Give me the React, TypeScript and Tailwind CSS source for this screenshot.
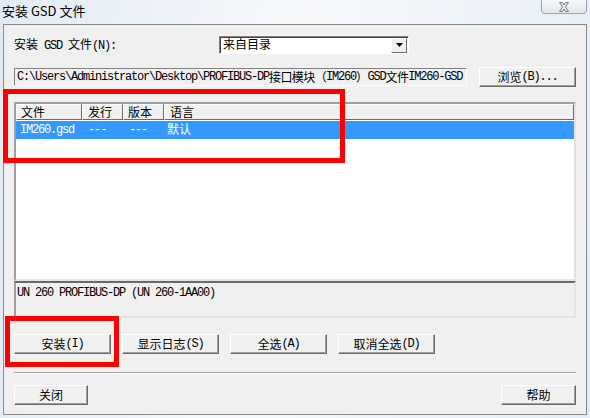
import React from "react";

const CJK = /([\u2E80-\u9FFF\uFF00-\uFFEF\u3000-\u303F]+)/;

// mixed text: ascii in a narrow mono, CJK in Noto at 12px (like SimSun)
function T({ s, tight }: { s: string; tight?: boolean }) {
  return (
    <>
      {s.split(CJK).map((p, i) =>
        CJK.test(p) ? (
          <span
            key={i}
            className={
              tight
                ? "font-['Noto_Sans_CJK_SC',sans-serif] text-[12px] tracking-[-0.6px]"
                : "font-['Noto_Sans_CJK_SC',sans-serif] text-[12px] tracking-normal"
            }
          >
            {p}
          </span>
        ) : (
          <span key={i}>{p}</span>
        )
      )}
    </>
  );
}

function Btn({ label, className }: { label: string; className: string }) {
  return (
    <div
      className={
        "flex h-[20px] items-center justify-center border border-t-white border-l-white border-r-[#6a6a6a] border-b-[#6a6a6a] bg-[#f0f0f0] text-[12px] leading-none tracking-[-1.2px] text-black shadow-[inset_-1px_-1px_0_#a0a0a0] font-['Liberation_Mono','Noto_Sans_CJK_SC',monospace] " +
        className
      }
    >
      <T s={label} />
    </div>
  );
}

function CloseX() {
  return (
    <svg width="12" height="10" viewBox="0 0 12 10">
      <polygon
        points="1.5,0.5 4.5,0.5 6,3 7.5,0.5 10.5,0.5 7.5,5 10.5,9.5 7.5,9.5 6,7 4.5,9.5 1.5,9.5 4.5,5"
        fill="#ececec"
        stroke="#7d7d7d"
        strokeWidth="1"
        strokeLinejoin="round"
      />
    </svg>
  );
}

export default function App() {
  return (
    <div className="relative flex h-[418px] w-[590px] flex-col overflow-hidden bg-[linear-gradient(100deg,#e2eaf4_0%,#f7f9fc_45%,#eef3f9_75%,#e4ecf5_100%)]">
      {/* title bar */}
      <div className="flex h-[24px] items-start justify-between">
        <div className="pl-[2px] pt-[3px] font-['Noto_Sans_CJK_SC',sans-serif] text-[13px] leading-[16px] text-black">
          安装 GSD 文件
        </div>
        <div className="mr-[3px] -mt-px flex h-[15px] w-[46px] items-center justify-center rounded-b-[4px] border border-[#9aa2ab] bg-[linear-gradient(#f7f8fa,#e4e8ed)]">
          <CloseX />
        </div>
      </div>

      {/* dialog body */}
      <div className="mx-[3px] flex h-[391px] flex-col border border-[#8a8a8a] bg-[#f0f0f0] px-[10px] pt-[11px] font-['Liberation_Mono','Noto_Sans_CJK_SC',monospace] text-[12px] tracking-[-1.2px] text-black">
        <div className="flex h-[18px] items-center">
          <div className="w-[205px] leading-none">
            <T s="安装 GSD 文件(N):" />
          </div>
          <div className="flex h-[18px] w-[190px] items-center border border-t-[#828282] border-l-[#828282] border-r-white border-b-white bg-white shadow-[inset_1px_1px_0_#404040]">
            <div className="flex-1 pl-[3px] leading-none">
              <T s="来自目录" />
            </div>
            <div className="mr-px flex h-[15px] w-[16px] items-center justify-center border border-t-white border-l-white border-r-[#6a6a6a] border-b-[#6a6a6a] bg-[#f0f0f0]">
              <svg width="7" height="4" viewBox="0 0 7 4">
                <polygon points="0,0 7,0 3.5,4" fill="#000" />
              </svg>
            </div>
          </div>
        </div>

        <div className="mt-[13px] flex h-[20px] items-start justify-between">
          <div className="mt-px flex h-[18px] w-[453px] items-center overflow-hidden whitespace-nowrap border border-t-[#828282] border-l-[#828282] border-r-white border-b-white bg-[#f0f0f0] pl-[2px] leading-none">
            <T tight s="C:\Users\Administrator\Desktop\PROFIBUS-DP接口模块（IM260）GSD文件IM260-GSD" />
          </div>
          <Btn label="浏览(B)..." className="w-[97px]" />
        </div>

        {/* list view */}
        <div className="mt-[15px] flex h-[179px] flex-col border-2 border-t-[#a0a0a0] border-l-[#a0a0a0] border-r-[#e3e3e3] border-b-[#e3e3e3] bg-white">
          <div className="flex h-[16px] bg-[#f0f0f0] leading-none">
            <div className="flex w-[66px] items-center border border-t-white border-l-white border-r-[#6a6a6a] border-b-[#6a6a6a] pl-[4px]">
              <T s="文件" />
            </div>
            <div className="flex w-[41px] items-center border border-t-white border-l-white border-r-[#6a6a6a] border-b-[#6a6a6a] pl-[5px]">
              <T s="发行" />
            </div>
            <div className="flex w-[41px] items-center border border-t-white border-l-white border-r-[#6a6a6a] border-b-[#6a6a6a] pl-[4px]">
              <T s="版本" />
            </div>
            <div className="flex flex-1 items-center border border-t-white border-l-white border-r-[#6a6a6a] border-b-[#6a6a6a] pl-[5px]">
              <T s="语言" />
            </div>
          </div>
          <div className="mt-[1px] flex h-[18px] items-center bg-[#3399ff] leading-none text-white">
            <div className="w-[66px] pl-[4px]">IM260.gsd</div>
            <div className="w-[41px] pl-[6px]">---</div>
            <div className="w-[41px] pl-[6px]">---</div>
            <div className="flex-1 pl-[3px]">
              <T s="默认" />
            </div>
          </div>
        </div>

        {/* description */}
        <div className="h-[37px] border-2 border-t-[#6a6a6a] border-l-[#a0a0a0] border-r-[#e3e3e3] border-b-[#e3e3e3] bg-[#f0f0f0] pl-px pt-[4px] leading-[12px]">
          UN 260 PROFIBUS-DP (UN 260-1AA00)
        </div>

        <div className="mt-[16px] flex h-[20px] gap-[11px]">
          <Btn label="安装(I)" className="w-[97px]" />
          <Btn label="显示日志(S)" className="w-[97px]" />
          <Btn label="全选(A)" className="w-[97px]" />
          <Btn label="取消全选(D)" className="w-[97px]" />
        </div>

        <div className="mt-[18px] h-[2px] border-t border-t-[#a0a0a0] border-b border-b-white" />

        <div className="mt-[11px] flex h-[20px] justify-between">
          <Btn label="关闭" className="w-[74px]" />
          <Btn label="帮助" className="w-[75px]" />
        </div>
      </div>

      {/* red annotation boxes */}
      <div className="pointer-events-none absolute left-[3px] top-[89px] h-[74px] w-[342px] border-[5px] border-[#ff0000]" />
      <div className="pointer-events-none absolute left-[5px] top-[316px] h-[51px] w-[114px] border-[5px] border-[#ff0000]" />
    </div>
  );
}
